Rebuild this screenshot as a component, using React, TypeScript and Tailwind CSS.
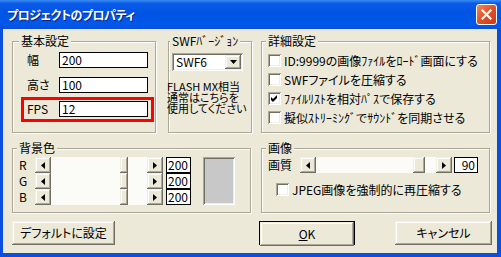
import type { ReactNode } from 'react'

const raised =
  'bg-[#ece9d8] shadow-[inset_-1px_-1px_#716f64,inset_1px_1px_#f1efe2,inset_-2px_-2px_#aca899,inset_2px_2px_#fff]'
const sunken =
  'shadow-[inset_1px_1px_#aca899,inset_-1px_-1px_#fff,inset_2px_2px_#716f64,inset_-2px_-2px_#f1efe2]'

// half-width kana keep their fixed width, palt would squeeze them
function Hw({ children }: { children: ReactNode }) {
  return <span className="[font-feature-settings:normal]">{children}</span>
}

function Group({
  title,
  className,
  legendClass,
  children,
}: {
  title: ReactNode
  className: string
  legendClass: string
  children: ReactNode
}) {
  return (
    <fieldset
      className={`shrink-0 border border-[#aca899] shadow-[inset_1px_1px_#fff,1px_1px_#fff] ${className}`}
    >
      <legend className={`px-[2px] leading-[14px] bg-[#ece9d8] whitespace-nowrap ${legendClass}`}>{title}</legend>
      {children}
    </fieldset>
  )
}

function Edit({ className, children }: { className: string; children: ReactNode }) {
  return (
    <div className={`bg-white border border-black h-[16px] leading-[14px] ${className}`}>
      {children}
    </div>
  )
}

function CheckBox({ checked, className, label }: { checked?: boolean; className: string; label: ReactNode }) {
  return (
    <div className={`flex items-center h-[19px] ${className}`}>
      <div className={`w-[13px] h-[13px] shrink-0 bg-white ${sunken}`}>
        {checked && (
          <svg width="13" height="13" viewBox="0 0 13 13">
            <polygon points="3,5 5,7 9,3 9,6 5,10 3,8" fill="#000" />
          </svg>
        )}
      </div>
      <span className="ml-[3px] leading-[14px] whitespace-nowrap">{label}</span>
    </div>
  )
}

function Arrow({ dir }: { dir: 'left' | 'right' }) {
  return (
    <div className={`w-[16px] h-[16px] shrink-0 flex items-center justify-center ${raised}`}>
      <svg width="4" height="7" viewBox="0 0 4 7">
        <polygon points={dir === 'left' ? '4,0 4,7 0,3.5' : '0,0 0,7 4,3.5'} fill="#000" />
      </svg>
    </div>
  )
}

function ScrollBar({
  className,
  track,
  thumb,
  thumbClass,
  value,
  max,
}: {
  className: string
  track: number
  thumb: number
  thumbClass: string
  value: number
  max: number
}) {
  const offset = Math.round((value / max) * (track - thumb))
  return (
    <div className={`flex h-[16px] shrink-0 ${className}`}>
      <Arrow dir="left" />
      <div className="flex-1 flex bg-[#fbfbf8]">
        <div style={{ width: offset }} />
        <div className={`h-full ${thumbClass} ${raised}`} />
      </div>
      <Arrow dir="right" />
    </div>
  )
}

function Button({ className, children }: { className: string; children: ReactNode }) {
  return (
    <div className={`h-[24px] flex items-center justify-center leading-[14px] ${raised} ${className}`}>
      {children}
    </div>
  )
}

export default function App() {
  return (
    <div className="w-[501px] h-[257px] flex flex-col bg-[#0a4fe0] text-[12px] text-black font-['Noto_Sans_CJK_JP',sans-serif] [font-feature-settings:'palt']">
      {/* title bar */}
      <div className="h-[29px] shrink-0 flex items-center justify-between pl-[7px] pr-[4px] bg-[linear-gradient(180deg,#3b8cf5_0%,#0a5ae8_12%,#0054e3_45%,#0058ea_85%,#0a4ed8_100%)]">
        <span className="text-white font-bold text-[12px] tracking-[-0.5px] leading-[14px] [text-shadow:1px_1px_#0a1f80]">
          プロジェクトのプロパティ
        </span>
        <div className="w-[21px] h-[21px] rounded-[3px] border border-white flex items-center justify-center bg-[linear-gradient(135deg,#f08a60_0%,#e2542a_45%,#c8391a_100%)]">
          <svg width="11" height="11" viewBox="0 0 11 11">
            <path d="M1.5 1.5 L9.5 9.5 M9.5 1.5 L1.5 9.5" stroke="#fff" strokeWidth="2.2" strokeLinecap="square" />
          </svg>
        </div>
      </div>

      {/* client area */}
      <div className="flex-1 ml-[3px] mr-[4px] mb-[4px] bg-[#ece9d8] pt-[5px] pl-[9px] flex flex-col">
        <div className="flex h-[99px]">
          <Group title="基本設定" className="w-[144px] h-[99px]" legendClass="ml-[6px]">
            <div className="ml-[8px] w-[133px] h-[25px] border-[3px] border-transparent flex items-start pt-px px-[3px]">
              <span className="w-[32px] leading-[16px]">幅</span>
              <Edit className="w-[89px] pl-[2px]">200</Edit>
            </div>
            <div className="ml-[8px] w-[133px] h-[24px] border-[3px] border-transparent flex items-start pt-px px-[3px]">
              <span className="w-[32px] leading-[16px]">高さ</span>
              <Edit className="w-[89px] pl-[2px]">100</Edit>
            </div>
            <div className="ml-[8px] w-[133px] h-[25px] border-[3px] border-[#ff0000] flex items-start pt-px px-[3px]">
              <span className="w-[32px] leading-[16px]">FPS</span>
              <Edit className="w-[89px] pl-[2px]">12</Edit>
            </div>
          </Group>

          <Group
            title={<>SWF<Hw>ﾊﾞｰｼﾞｮﾝ</Hw></>}
            className="ml-[12px] w-[84px] h-[99px]"
            legendClass="ml-[1px]"
          >
            <div className={`ml-[3px] mt-[5px] w-[71px] h-[18px] flex items-center bg-white p-[2px] ${sunken}`}>
              <span className="flex-1 pl-[2px] leading-[14px]">SWF6</span>
              <div className={`w-[16px] h-[14px] flex items-center justify-center ${raised}`}>
                <svg width="7" height="4" viewBox="0 0 7 4">
                  <polygon points="0,0 7,0 3.5,4" fill="#000" />
                </svg>
              </div>
            </div>
            <div className="-ml-[2px] mt-[10px] text-[11px] leading-[11px] whitespace-nowrap">
              <div>FLASH MX相当</div>
              <div>通常はこちらを</div>
              <div>使用してください</div>
            </div>
          </Group>

          <Group title="詳細設定" className="ml-[9px] w-[229px] h-[99px]" legendClass="ml-[4px]">
            <div className="ml-[6px] mt-[3px] flex flex-col">
              <CheckBox className="" label={<>ID:9999の画像<Hw>ﾌｧｲﾙ</Hw>を<Hw>ﾛｰﾄﾞ</Hw>画面にする</>} />
              <CheckBox className="" label="SWFファイルを圧縮する" />
              <CheckBox className="" checked label={<><Hw>ﾌｧｲﾙﾘｽﾄ</Hw>を相対<Hw>ﾊﾟｽ</Hw>で保存する</>} />
              <CheckBox className="" label={<>擬似<Hw>ｽﾄﾘｰﾐﾝｸﾞ</Hw>で<Hw>ｻｳﾝﾄﾞ</Hw>を同期させる</>} />
            </div>
          </Group>
        </div>

        <div className="flex h-[72px] mt-[8px]">
          <Group title="背景色" className="w-[239px] h-[72px]" legendClass="ml-[4px]">
            <div className="flex mt-[2px]">
              <div className="flex flex-col">
                {['R', 'G', 'B'].map((c) => (
                  <div key={c} className="flex items-center h-[16px]">
                    <span className="ml-[6px] w-[16px] leading-[14px]">{c}</span>
                    <ScrollBar className="w-[128px]" track={96} thumb={8} thumbClass="w-[8px]" value={200} max={255} />
                    <Edit className="ml-[3px] w-[25px] pl-[1px]">200</Edit>
                  </div>
                ))}
              </div>
              <div className={`ml-[12px] w-[32px] h-[48px] bg-[#c8c8c8] ${sunken}`} />
            </div>
          </Group>

          <Group title="画像" className="ml-[10px] w-[229px] h-[72px]" legendClass="ml-[4px]">
            <div className="flex items-center h-[16px] mt-[2px]">
              <span className="ml-[6px] w-[32px] leading-[14px]">画質</span>
              <ScrollBar className="w-[152px]" track={120} thumb={12} thumbClass="w-[12px]" value={90} max={100} />
              <Edit className="ml-[2px] w-[24px] pr-[2px] text-right">90</Edit>
            </div>
            <CheckBox className="ml-[14px] mt-[7px]" label="JPEG画像を強制的に再圧縮する" />
          </Group>
        </div>

        <div className="flex mt-[8px] h-[24px]">
          <Button className="w-[103px]">デフォルトに設定</Button>
          <div className="ml-[144px] w-[96px] h-[24px] border border-black">
            <Button className="w-full h-[22px]">
              <span className="underline">O</span>K
            </Button>
          </div>
          <Button className="ml-[40px] w-[97px]">キャンセル</Button>
        </div>
      </div>
    </div>
  )
}
